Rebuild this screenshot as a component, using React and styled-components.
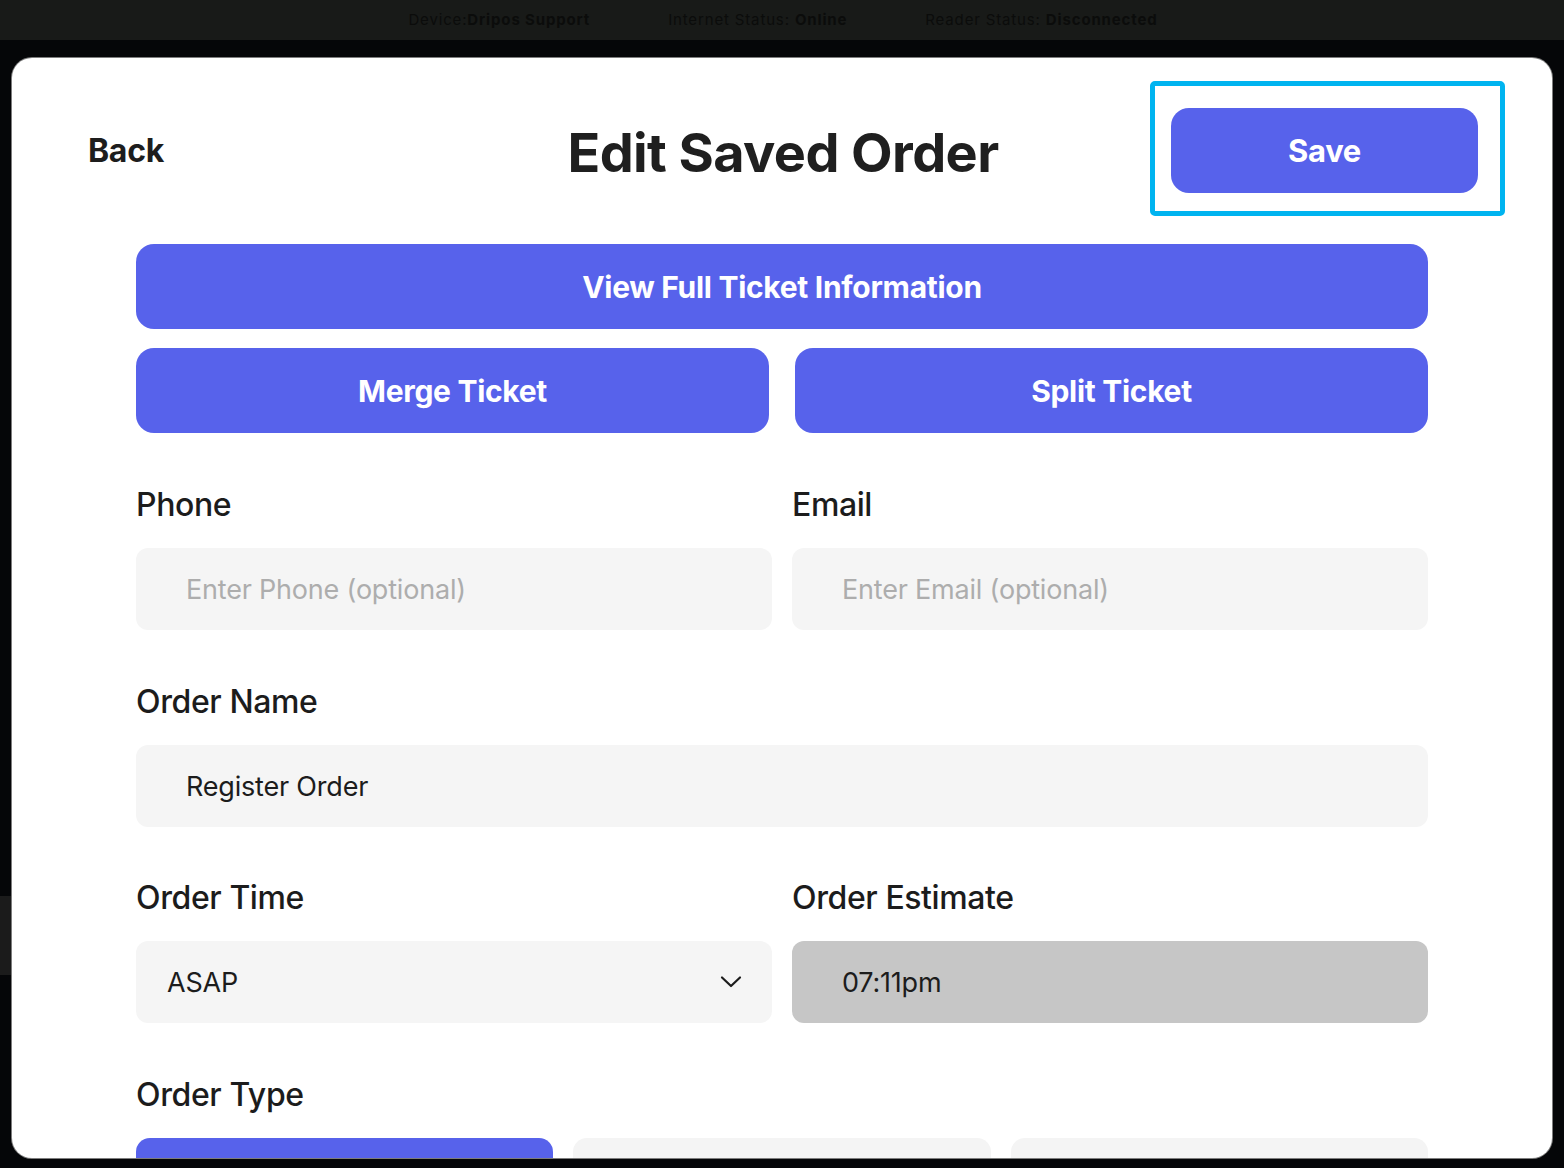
import React from "react";
import styled, { createGlobalStyle } from "styled-components";

const Global = createGlobalStyle`
  html, body { margin: 0; padding: 0; }
  body {
    width: 1564px;
    height: 1168px;
    overflow: hidden;
    background: #050608;
    font-family: "Inter", "Noto Sans", sans-serif;
  }
  * { box-sizing: border-box; }
`;

const Page = styled.div`
  width: 1564px;
  height: 1168px;
  display: flex;
  flex-direction: column;
  background-color: #050608;
  background-image: linear-gradient(#1b1b1b, #1b1b1b);
  background-repeat: no-repeat;
  background-size: 11px 79px;
  background-position: 0 896px;
`;

const StatusBar = styled.div`
  height: 40px;
  flex: none;
  background: #181a18;
  display: flex;
  justify-content: center;
  align-items: center;
  gap: 78px;
  padding-left: 2px;
  padding-bottom: 2px;
`;

const StatusItem = styled.span`
  font-size: 15px;
  letter-spacing: 0.85px;
  color: #0b0c0b;
  font-weight: 400;
  b { font-weight: 700; }
`;

const Modal = styled.div`
  margin: 18px 12px 0 12px;
  height: 1100px;
  background: #ffffff;
  border-radius: 20px;
  box-shadow: 0 0 0 1px #7d7d7d;
  overflow: hidden;
  padding: 50px 124px 0 124px;
  display: flex;
  flex-direction: column;
`;

const Header = styled.div`
  display: grid;
  grid-template-columns: 1fr auto 1fr;
  align-items: center;
  height: 85px;
  margin: 0 -50px 0 -48px;
`;

const BackLink = styled.span`
  font-size: 32px;
  font-weight: 700;
  color: #1d1d1d;
  letter-spacing: -0.3px;
  justify-self: start;
`;

const Title = styled.h1`
  margin: 4px 0 0 0;
  font-size: 54px;
  font-weight: 700;
  color: #1f1f1f;
  letter-spacing: -0.6px;
  line-height: 1;
`;

const SaveWrap = styled.div`
  justify-self: end;
  position: relative;
  &::before {
    content: "";
    position: absolute;
    left: -21px;
    right: -27px;
    top: -27px;
    bottom: -23px;
    border: 5px solid #00b4f0;
    border-radius: 5px;
    pointer-events: none;
  }
`;

const PrimaryButton = styled.button`
  border: none;
  background: #5762eb;
  color: #ffffff;
  font-family: "Inter", "Noto Sans", sans-serif;
  font-weight: 700;
  font-size: ${(p) => p.$size || 30}px;
  letter-spacing: -0.3px;
  border-radius: 18px;
  height: ${(p) => p.$h || 85}px;
  width: ${(p) => (p.$w ? p.$w + "px" : "100%")};
  display: flex;
  align-items: center;
  justify-content: center;
  padding: 0;
  cursor: pointer;
`;

const ButtonRow = styled.div`
  display: flex;
  gap: ${(p) => p.$gap || 26}px;
  margin-top: ${(p) => p.$mt || 0}px;
`;

const FieldRow = styled.div`
  display: grid;
  grid-template-columns: ${(p) => (p.$cols === 1 ? "1fr" : "1fr 1fr")};
  gap: 20px;
  margin-top: ${(p) => p.$mt || 52}px;
`;

const Field = styled.div`
  display: flex;
  flex-direction: column;
  gap: 24px;
`;

const Label = styled.div`
  font-size: 32px;
  font-weight: 500;
  color: #1c1c1c;
  letter-spacing: -0.4px;
  line-height: 39px;
`;

const InputBox = styled.div`
  height: 82px;
  border-radius: 12px;
  background: ${(p) => (p.$disabled ? "#c6c6c6" : "#f5f5f5")};
  display: flex;
  align-items: center;
  justify-content: space-between;
  padding: 0 30px 0 ${(p) => p.$pl || 50}px;
  font-size: 27px;
  letter-spacing: -0.2px;
  color: ${(p) => (p.$placeholder ? "#adadad" : "#1c1c1c")};
`;

const TypeRow = styled.div`
  display: grid;
  grid-template-columns: repeat(3, 1fr);
  gap: 20px;
`;

const TypeButton = styled.div`
  height: 82px;
  border-radius: 14px;
  background: ${(p) => (p.$active ? "#5762eb" : "#f4f4f4")};
`;

const Chevron = () => (
  <svg width="22" height="14" viewBox="0 0 22 14" fill="none">
    <path d="M2 2.5 L11 11 L20 2.5" stroke="#1c1c1c" strokeWidth="2.2" strokeLinecap="round" strokeLinejoin="round" />
  </svg>
);

export default function App() {
  return (
    <>
      <Global />
      <Page>
        <StatusBar>
          <StatusItem>Device:<b>Dripos Support</b></StatusItem>
          <StatusItem>Internet Status: <b>Online</b></StatusItem>
          <StatusItem>Reader Status: <b>Disconnected</b></StatusItem>
        </StatusBar>
        <Modal>
          <Header>
            <BackLink>Back</BackLink>
            <Title>Edit Saved Order</Title>
            <SaveWrap>
              <PrimaryButton $w={307} $size={31}>Save</PrimaryButton>
            </SaveWrap>
          </Header>

          <ButtonRow $mt={51}>
            <PrimaryButton>View Full Ticket Information</PrimaryButton>
          </ButtonRow>
          <ButtonRow $mt={19} $gap={26}>
            <PrimaryButton>Merge Ticket</PrimaryButton>
            <PrimaryButton>Split Ticket</PrimaryButton>
          </ButtonRow>

          <FieldRow>
            <Field>
              <Label>Phone</Label>
              <InputBox $placeholder>Enter Phone (optional)</InputBox>
            </Field>
            <Field>
              <Label>Email</Label>
              <InputBox $placeholder>Enter Email (optional)</InputBox>
            </Field>
          </FieldRow>

          <FieldRow $cols={1}>
            <Field>
              <Label>Order Name</Label>
              <InputBox>Register Order</InputBox>
            </Field>
          </FieldRow>

          <FieldRow $mt={51}>
            <Field>
              <Label>Order Time</Label>
              <InputBox $pl={31}>
                <span>ASAP</span>
                <Chevron />
              </InputBox>
            </Field>
            <Field>
              <Label>Order Estimate</Label>
              <InputBox $disabled>07:11pm</InputBox>
            </Field>
          </FieldRow>

          <FieldRow $cols={1}>
            <Field>
              <Label>Order Type</Label>
              <TypeRow>
                <TypeButton $active />
                <TypeButton />
                <TypeButton />
              </TypeRow>
            </Field>
          </FieldRow>
        </Modal>
      </Page>
    </>
  );
}
